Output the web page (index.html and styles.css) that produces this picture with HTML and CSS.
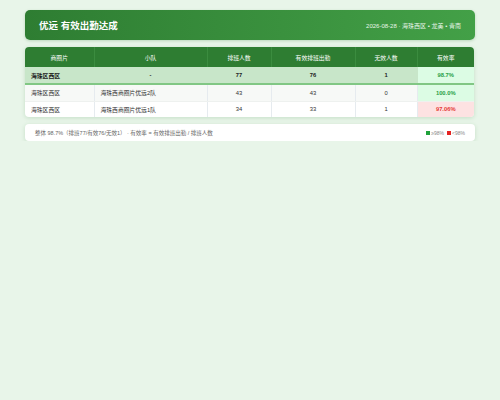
FILE: index.html
```html
<!DOCTYPE html>
<html lang="zh">
<head>
<meta charset="utf-8">
<link rel="stylesheet" href="styles.css">
</head>
<body>
<div class="page">
  <header class="banner">
    <h1 class="title">优远 有效出勤达成</h1>
    <div class="meta">2026-08-28 · 海珠西区 • 龙美 • 青南</div>
  </header>
  <div class="card table-card">
    <table class="grid">
      <colgroup>
        <col class="c1"><col class="c2"><col class="c3"><col class="c4"><col class="c5"><col class="c6">
      </colgroup>
      <thead>
        <tr><th>商圈片</th><th>小队</th><th>排班人数</th><th>有效排班出勤</th><th>无效人数</th><th>有效率</th></tr>
      </thead>
      <tbody>
        <tr class="sum">
          <td class="left">海珠区西区</td><td>-</td><td>77</td><td>76</td><td>1</td><td class="rate good">98.7%</td>
        </tr>
        <tr class="odd">
          <td class="left">海珠区西区</td><td class="left">海珠西商圈片优远2队</td><td>43</td><td>43</td><td>0</td><td class="rate good">100.0%</td>
        </tr>
        <tr>
          <td class="left">海珠区西区</td><td class="left">海珠西商圈片优远1队</td><td>34</td><td>33</td><td>1</td><td class="rate bad">97.06%</td>
        </tr>
      </tbody>
    </table>
  </div>
  <div class="card foot">
    <span class="note">整体 98.7%（排班77/有效76/无效1） · 有效率 = 有效排班出勤 / 排班人数</span>
    <span class="legend"><i class="sq green"></i>≥98% <i class="sq red"></i>&lt;98%</span>
  </div>
</div>
</body>
</html>
```
FILE: styles.css
```css
html, body {
  margin: 0;
  padding: 0;
  background: #e8f5e9;
  font-family: "Liberation Sans", "Noto Sans CJK SC", sans-serif;
}
.page {
  width: 450px;
  margin: 0 auto;
  padding-top: 10px;
  display: flex;
  flex-direction: column;
  gap: 7px;
}
.banner {
  height: 30px;
  box-sizing: border-box;
  border-radius: 5px;
  background: linear-gradient(90deg, #2e7d32 0%, #43a047 100%);
  display: flex;
  align-items: center;
  justify-content: space-between;
  padding: 0 14px;
  color: #fff;
  box-shadow: 0 1px 3px rgba(46, 125, 50, 0.25);
}
.title {
  margin: 0;
  font-size: 9.5px;
  font-weight: 700;
}
.meta {
  font-size: 6px;
  color: #e8f5e9;
}
.card {
  background: #fff;
  border-radius: 4px;
  box-shadow: 0 1px 4px rgba(46, 125, 50, 0.18);
  overflow: hidden;
}
.table-card {
  width: 449px;
}
.grid {
  width: 100%;
  border-collapse: collapse;
  table-layout: fixed;
  font-size: 5.8px;
  color: #333;
}
.c1 { width: 69px; }
.c2 { width: 113px; }
.c3 { width: 64px; }
.c4 { width: 84px; }
.c5 { width: 62px; }
.c6 { width: 57px; }
th {
  background: #2e7d32;
  color: #fff;
  font-weight: 400;
  height: 20px;
  padding: 0;
  border-left: 1px solid #3b8c3f;
  text-align: center;
}
th:first-child { border-left: none; }
td {
  height: 15.5px;
  padding: 0 6px;
  text-align: center;
  border-left: 1px solid #e6ebef;
  border-bottom: 1px solid #eef1ef;
}
td:first-child { border-left: none; }
td.left { text-align: left; }
tr.sum td {
  background: #c8e6c9;
  font-weight: 700;
  color: #1b1b1b;
  height: 16px;
  border-bottom: 2px solid #81c784;
  border-left-color: #c8e6c9;
}
tr.odd td { background: #f7f9f7; }
tr:last-child td { border-bottom: none; }
tr td.rate { font-weight: 700; }
tr td.good { background: #dcfce4; color: #27a046; }
tr td.bad { background: #fde2e2; color: #e53935; }
.foot {
  height: 17px;
  display: flex;
  align-items: center;
  justify-content: space-between;
  padding: 0 10px;
  font-size: 5.5px;
  color: #666;
}
.legend {
  display: flex;
  align-items: center;
  gap: 1px;
  font-size: 5px;
  color: #888;
}
.sq {
  display: inline-block;
  width: 4px;
  height: 4px;
}
.sq.green { background: #1fa23b; }
.sq.red { background: #e52222; margin-left: 2px; }
```
